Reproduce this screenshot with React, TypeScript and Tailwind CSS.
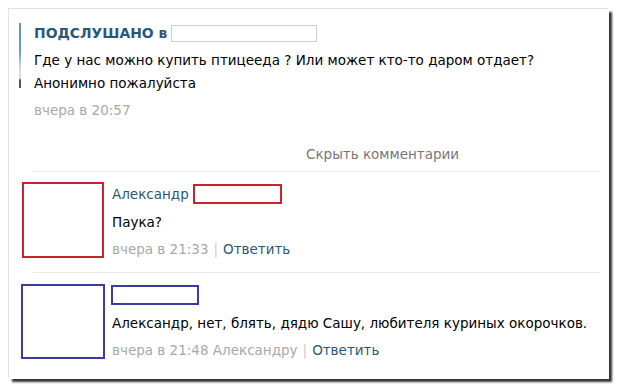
import React from "react";

const font = { fontFamily: '"DejaVu Sans", Verdana, sans-serif' };

export default function App() {
  return (
    <div className="w-[620px] h-[391px] bg-white pt-[9px] pl-[9px] overflow-hidden" style={font}>
      <div className="w-[600px] h-[370px] bg-white shadow-[-1px_-1px_0_#e2e2e2,3px_3px_2px_rgba(0,0,0,0.8)] pt-[14px] text-[13.5px] text-black">
        {/* post */}
        <div className="flex pl-[10px]">
          <div className="w-[2px] h-[65px] bg-[linear-gradient(to_bottom,#5f93ba_0%,#6e9cc0_45%,#d5dde3_70%,#d5dde3_85%,#555_88%,#555_100%)]" />
          <div className="ml-[13px] flex flex-col">
            <div className="h-[20px] flex items-center">
              <span className="font-bold text-[13.9px] text-[#2b587a]">ПОДСЛУШАНО в</span>
              <span className="ml-[4px] w-[146px] h-[17px] border border-[#cfcfcf]" />
            </div>
            <div className="mt-[6px] h-[23px] flex items-center whitespace-nowrap">Где у нас можно купить птицееда ? Или может кто-то даром отдает?</div>
            <div className="h-[23px] flex items-center">Анонимно пожалуйста</div>
            <div className="mt-[4px] h-[22px] flex items-center text-[#a8a8a8]">вчера в 20:57</div>
          </div>
        </div>
        <div className="mt-[22px] h-[22px] flex items-center pl-[297px] text-[#777]">Скрыть комментарии</div>
        <div className="mt-[6px] ml-[24px] w-[567px] h-px bg-[#ebebeb]" />
        {/* comment 1 */}
        <div className="flex items-start h-[76px] mt-[10px] pl-[13px]">
          <div className="w-[82px] h-[76px] border-2 border-[#c9232f] shrink-0" />
          <div className="ml-[8px] flex flex-col">
            <div className="h-[20px] mt-[2px] flex items-center">
              <span className="text-[#2b587a]">Александр</span>
              <span className="ml-[4px] w-[89px] h-[20px] border-2 border-[#c9232f]" />
            </div>
            <div className="mt-[7px] h-[22px] flex items-center">Паука?</div>
            <div className="mt-[5px] h-[22px] flex items-center text-[#a8a8a8]">
              вчера в 21:33<span className="mx-[5px] text-[#ccc]">|</span><span className="text-[#2b587a]">Ответить</span>
            </div>
          </div>
        </div>
        <div className="mt-[14px] ml-[24px] w-[567px] h-px bg-[#ebebeb]" />
        {/* comment 2 */}
        <div className="flex items-start h-[75px] mt-[11px] pl-[12px]">
          <div className="w-[84px] h-[75px] border-2 border-[#3b3ba8] shrink-0" />
          <div className="ml-[6px] flex flex-col">
            <div className="h-[20px] mt-[1px] flex items-center">
              <span className="w-[88px] h-[20px] border-2 border-[#3b3ba8]" />
            </div>
            <div className="mt-[7px] h-[22px] flex items-center pl-[1px] whitespace-nowrap">Александр, нет, блять, дядю Сашу, любителя куриных окорочков.</div>
            <div className="mt-[5px] h-[22px] flex items-center pl-[1px] text-[#a8a8a8]">
              вчера в 21:48 Александру<span className="mx-[5px] text-[#ccc]">|</span><span className="text-[#2b587a]">Ответить</span>
            </div>
          </div>
        </div>
      </div>
    </div>
  );
}
